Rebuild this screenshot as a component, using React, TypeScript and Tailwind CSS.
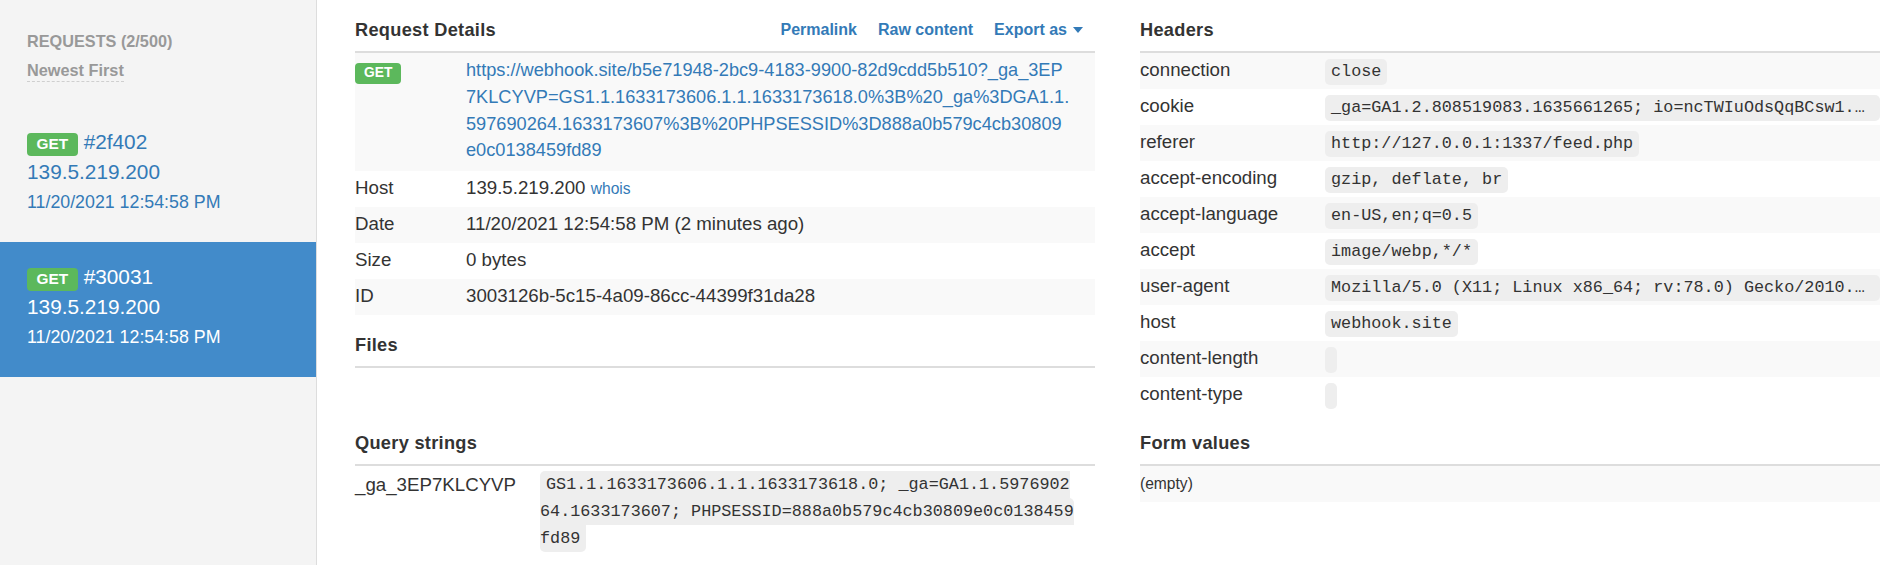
import React from "react";

const requests = [
  { id: "#2f402", ip: "139.5.219.200", date: "11/20/2021 12:54:58 PM", active: false },
  { id: "#30031", ip: "139.5.219.200", date: "11/20/2021 12:54:58 PM", active: true },
];

const headers: [string, string][] = [
  ["connection", "close"],
  ["cookie", "_ga=GA1.2.808519083.1635661265; io=ncTWIuOdsQqBCsw1..."],
  ["referer", "http://127.0.0.1:1337/feed.php"],
  ["accept-encoding", "gzip, deflate, br"],
  ["accept-language", "en-US,en;q=0.5"],
  ["accept", "image/webp,*/*"],
  ["user-agent", "Mozilla/5.0 (X11; Linux x86_64; rv:78.0) Gecko/2010..."],
  ["host", "webhook.site"],
  ["content-length", ""],
  ["content-type", ""],
];

const urlLines = [
  "https://webhook.site/b5e71948-2bc9-4183-9900-82d9cdd5b510?_ga_3EP",
  "7KLCYVP=GS1.1.1633173606.1.1.1633173618.0%3B%20_ga%3DGA1.1.",
  "597690264.1633173607%3B%20PHPSESSID%3D888a0b579c4cb30809",
  "e0c0138459fd89",
];

const SectionTitle = ({ title, children }: { title: string; children?: React.ReactNode }) => (
  <div className="h-[53px] border-b-2 border-[#ddd] flex items-start justify-between pt-[19px]">
    <h3 className="text-[18.2px] tracking-[0.3px] font-bold leading-[22px]">{title}</h3>
    {children}
  </div>
);

const App = () => {
  return (
    <div className="flex min-h-screen bg-white text-[#333] font-['Liberation_Sans',Arial,sans-serif]">
      {/* Sidebar */}
      <aside className="w-[317px] shrink-0 bg-[#f4f4f4] border-r border-[#ddd]">
        <div className="pl-[27px] pt-[32px] h-[107px]">
          <div className="text-[16.25px] font-bold leading-[18px] text-[#999]">REQUESTS (2/500)</div>
          <div className="mt-[9px]">
            <span className="inline-block text-[16.3px] font-bold leading-[20px] text-[#999] border-b border-dashed border-[#cfcfcf] pb-[1px]">
              Newest First
            </span>
          </div>
        </div>
        {requests.map((r) => (
          <div
            key={r.id}
            className={`pl-[27px] pt-[20px] pb-[25px] ${r.active ? "bg-[#428bca] text-white" : "text-[#337ab7]"}`}
          >
            <div className="text-[20.8px] leading-[30px]">
              <span className="inline-block bg-[#5cb85c] text-white font-bold text-[15.4px] leading-none px-[9.5px] pt-[3px] pb-[5px] rounded-[4px] mr-[6px]">
                GET
              </span>
              {r.id}
            </div>
            <div className="text-[20.8px] leading-[30px]">{r.ip}</div>
            <div className="text-[17.8px] leading-[30px]">{r.date}</div>
          </div>
        ))}
      </aside>

      {/* Main */}
      <main className="flex-1 grid grid-cols-2 gap-x-[45px] pl-[38px] pr-[13px] items-start">
        {/* Left column */}
        <div>
          <SectionTitle title="Request Details">
            <div className="flex items-center gap-[21px] pr-[12px] text-[16px] font-bold leading-[22px] text-[#337ab7]">
              <span>Permalink</span>
              <span>Raw content</span>
              <span className="flex items-center gap-[6px]">
                Export as
                <span className="inline-block w-0 h-0 border-x-[5.5px] border-x-transparent border-t-[6px] border-t-[#337ab7]" />
              </span>
            </div>
          </SectionTitle>

          <div className="text-[18.7px]">
            <div className="flex bg-[#f9f9f9] pt-[4px] pb-[7px]">
              <div className="w-[111px] shrink-0">
                <span className="inline-block mt-[5px] bg-[#5cb85c] text-white font-bold text-[13.8px] leading-none px-[9px] pt-[3px] pb-[4.6px] rounded-[4px]">
                  GET
                </span>
              </div>
              <div className="text-[#337ab7] text-[18.2px] leading-[26.75px]">
                {urlLines.map((l) => (
                  <div key={l} className="whitespace-nowrap">{l}</div>
                ))}
              </div>
            </div>
            <div className="flex items-center h-[36px] pb-[2px]">
              <div className="w-[111px] shrink-0">Host</div>
              <div>
                139.5.219.200 <span className="text-[15.6px] text-[#337ab7]">whois</span>
              </div>
            </div>
            <div className="flex items-center h-[36px] pb-[2px] bg-[#f9f9f9]">
              <div className="w-[111px] shrink-0">Date</div>
              <div>11/20/2021 12:54:58 PM (2 minutes ago)</div>
            </div>
            <div className="flex items-center h-[36px] pb-[2px]">
              <div className="w-[111px] shrink-0">Size</div>
              <div>0 bytes</div>
            </div>
            <div className="flex items-center h-[36px] pb-[2px] bg-[#f9f9f9]">
              <div className="w-[111px] shrink-0">ID</div>
              <div>3003126b-5c15-4a09-86cc-44399f31da28</div>
            </div>
          </div>

          <SectionTitle title="Files" />
          <div className="h-[45px]" />

          <SectionTitle title="Query strings" />
          <div className="flex pt-[5px] text-[18.7px]">
            <div className="w-[185px] shrink-0 leading-[27px]">_ga_3EP7KLCYVP</div>
            <div className="font-['Liberation_Mono',monospace] text-[16.8px] leading-[27px]">
              <span className="block w-fit h-[27px] bg-[#eeeeee] pl-[6px] rounded-tl-[5px]">
                GS1.1.1633173606.1.1.1633173618.0; _ga=GA1.1.5976902
              </span>
              <span className="block w-fit h-[27px] bg-[#eeeeee] rounded-tr-[5px]">
                64.1633173607; PHPSESSID=888a0b579c4cb30809e0c0138459
              </span>
              <span className="block w-fit h-[27px] bg-[#eeeeee] pr-[6px] rounded-b-[5px]">fd89</span>
            </div>
          </div>
        </div>

        {/* Right column */}
        <div>
          <SectionTitle title="Headers" />
          <div className="text-[18.7px]">
            {headers.map(([k, v], i) => (
              <div key={k} className={`flex items-center h-[36px] ${i % 2 === 0 ? "bg-[#f9f9f9]" : ""}`}>
                <div className="w-[185px] shrink-0 pb-[2px]">{k}</div>
                <div className="flex-1 min-w-0">
                  <code className="inline-block align-middle max-w-full h-[26px] px-[6px] rounded-[5px] bg-[#eeeeee] font-['Liberation_Mono',monospace] text-[16.8px] leading-[26px] whitespace-nowrap overflow-hidden text-ellipsis">
                    {v}
                  </code>
                </div>
              </div>
            ))}
          </div>

          <SectionTitle title="Form values" />
          <div className="h-[36px] flex items-center bg-[#f9f9f9] text-[15.6px]">(empty)</div>
        </div>
      </main>
    </div>
  );
};

export default App;
